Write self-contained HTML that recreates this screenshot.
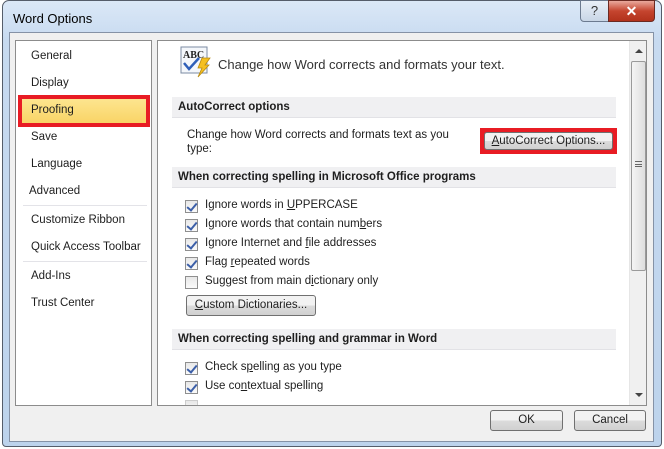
<!DOCTYPE html>
<html><head><style>
*{margin:0;padding:0;box-sizing:border-box}
body{width:664px;height:449px;overflow:hidden;background:#fff;font-family:"Liberation Sans",sans-serif;font-size:11.5px;color:#1e1e1e}
.win{position:absolute;left:2px;top:0;width:660px;height:447px;border:1px solid #555d6a;border-radius:7px 7px 4px 4px;background:linear-gradient(#dbe8f7,#c7daf0 40px,#bdd3ec)}
.title{position:absolute;left:10px;top:10px;font-size:13px;color:#000}
.client{position:absolute;left:9px;top:32px;width:645px;height:410px;background:#f0f0f0;border:1px solid #8592a6}
.lp{position:absolute;left:15px;top:40px;width:137px;height:366px;background:#fff;border:1px solid #8c8c8c}
.rp{position:absolute;left:157px;top:40px;width:490px;height:366px;background:#fff;border:1px solid #8c8c8c;overflow:hidden}
.li{position:absolute;left:15px;font-size:11.5px}
.sep{position:absolute;left:7px;width:124px;height:1px;background:#e3e3e8}
.abs{position:absolute}
.sec{position:absolute;left:14px;width:444px;height:21px;background:#f0f0f2;border-bottom:1px solid #e2e2e6;font-weight:bold;padding:4px 6px;font-size:11.5px}
.cb{position:absolute;left:27px;width:13px;height:13px;border:1px solid #8f8f8f;background:linear-gradient(#e8e8e8,#fafafa)}
.cb.c::after{content:"";position:absolute;left:3px;top:0px;width:4px;height:8px;border:solid #3c5fa8;border-width:0 2px 2px 0;transform:rotate(40deg)}
.ct{position:absolute;left:47px}
.btn{position:absolute;border:1px solid #707070;border-radius:3px;background:linear-gradient(#f2f2f2 50%,#dcdcdc 50%,#d0d0d0);text-align:center;font-size:11.5px;line-height:18px}
u{text-decoration:underline}
</style></head><body>
<div class="win">
<div class="title">Word Options</div>
<div class="abs" style="left:577px;top:-1px;width:29px;height:22px;border:1px solid #6c7a8f;border-radius:0 0 0 4px;background:linear-gradient(#e9eff7,#c9d6e6);text-align:center;font-size:13px;color:#333;line-height:20px">?</div>
<div class="abs" style="left:605px;top:-1px;width:47px;height:22px;border:1px solid #6b2a22;border-radius:0 0 4px 0;background:linear-gradient(#e9a99c,#c5452f 50%,#b2321c);text-align:center;font-size:14px;font-weight:bold;color:#fff;line-height:20px">✕</div>
</div>
<div class="client"></div>
<div class="lp">
<div class="li" style="top:9px">General</div>
<div class="li" style="top:36px">Display</div>
<div class="abs" style="left:2px;top:54px;width:132px;height:32px;border:4px solid #e81c24;background:linear-gradient(#fde58f,#f9d466)"></div>
<div class="li" style="top:63px">Proofing</div>
<div class="li" style="top:90px">Save</div>
<div class="li" style="top:117px">Language</div>
<div class="li" style="top:144px;left:13px">Advanced</div>
<div class="sep" style="top:164px"></div>
<div class="li" style="top:173px">Customize Ribbon</div>
<div class="li" style="top:200px">Quick Access Toolbar</div>
<div class="sep" style="top:220px"></div>
<div class="li" style="top:229px">Add-Ins</div>
<div class="li" style="top:256px">Trust Center</div>
</div>
<div class="rp">
<svg class="abs" style="left:22px;top:5px" width="32" height="32" viewBox="0 0 32 32">
<rect x="1" y="1" width="26" height="26" fill="#f4f7fb" stroke="#7b8ba3"/>
<text x="3" y="12" font-family="Liberation Serif" font-weight="bold" font-size="10" fill="#222">ABC</text>
<path d="M4 17 L9 23 L19 12" stroke="#2f5fb8" stroke-width="2.5" fill="none"/>
<path d="M22 12 L30 12 L25 19 L29 19 L18 31 L22 22 L18 22 Z" fill="#f5c021" stroke="#b88a10" stroke-width="0.8"/>
</svg>
<div class="abs" style="left:60px;top:16px;font-size:13px;color:#333">Change how Word corrects and formats your text.</div>
<div class="sec" style="top:56px">AutoCorrect options</div>
<div class="abs" style="left:29px;top:87px;line-height:14px">Change how Word corrects and formats text as you<br>type:</div>
<div class="abs" style="left:322px;top:87px;width:137px;height:26px;background:#e81c24"></div>
<div class="btn" style="left:326px;top:91px;width:129px;height:18px;line-height:16px"><u>A</u>utoCorrect Options...</div>
<div class="sec" style="top:126px">When correcting spelling in Microsoft Office programs</div>
<div class="cb c" style="top:159px"></div><div class="ct" style="top:158px">Ignore words in <u>U</u>PPERCASE</div>
<div class="cb c" style="top:178px"></div><div class="ct" style="top:177px">Ignore words that contain num<u>b</u>ers</div>
<div class="cb c" style="top:197px"></div><div class="ct" style="top:196px">Ignore Internet and <u>f</u>ile addresses</div>
<div class="cb c" style="top:216px"></div><div class="ct" style="top:215px">Flag <u>r</u>epeated words</div>
<div class="cb" style="top:235px"></div><div class="ct" style="top:234px">Suggest from main d<u>i</u>ctionary only</div>
<div class="btn" style="left:28px;top:254px;width:130px;height:21px"><u>C</u>ustom Dictionaries...</div>
<div class="sec" style="top:288px">When correcting spelling and grammar in Word</div>
<div class="cb c" style="top:321px"></div><div class="ct" style="top:320px">Check s<u>p</u>elling as you type</div>
<div class="cb c" style="top:340px"></div><div class="ct" style="top:339px">Use co<u>n</u>textual spelling</div>
<div class="cb" style="top:359px;border-color:#ccc"></div>
<div class="abs" style="left:471px;top:0;width:18px;height:366px;background:#f0f0f0;border-left:1px solid #e6e6e6">
<div class="abs" style="left:5px;top:8px;border:4px solid transparent;border-bottom:4px solid #444;border-top:0;width:0;height:0"></div>
<div class="abs" style="left:1px;top:20px;width:15px;height:210px;border:1px solid #9a9a9a;border-radius:2px;background:linear-gradient(90deg,#f4f4f4,#dedede)"></div>
<div class="abs" style="left:5px;top:120px;width:7px;height:6px;border-top:1px solid #666;border-bottom:1px solid #666"><div style="margin-top:2px;height:1px;background:#666"></div></div>
<div class="abs" style="left:5px;top:352px;border:4px solid transparent;border-top:4px solid #444;border-bottom:0;width:0;height:0"></div>
</div>
</div>
<div class="btn" style="left:490px;top:410px;width:73px;height:21px">OK</div>
<div class="btn" style="left:574px;top:410px;width:72px;height:21px">Cancel</div>
</body></html>
